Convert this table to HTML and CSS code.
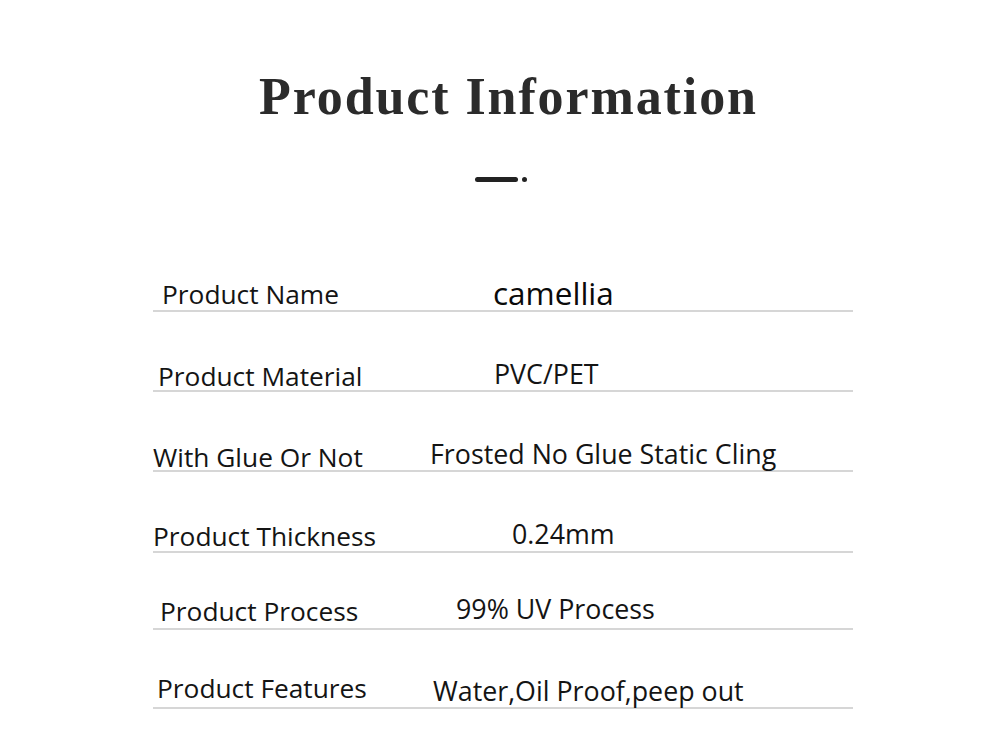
FILE: index.html
```html
<!DOCTYPE html>
<html lang="en">
<head>
<meta charset="utf-8">
<title>Product Information</title>
<link rel="stylesheet" href="styles.css">
</head>
<body>
<main class="page">
  <h1 class="title">Product Information</h1>
  <div class="divider"><span class="divider-line"></span><span class="divider-dot"></span></div>
  <section class="spec">
    <div class="row r1"><div class="label">Product Name</div><div class="value value-big">camellia</div></div>
    <div class="row r2"><div class="label">Product Material</div><div class="value">PVC/PET</div></div>
    <div class="row r3"><div class="label">With Glue Or Not</div><div class="value">Frosted No Glue Static Cling</div></div>
    <div class="row r4"><div class="label">Product Thickness</div><div class="value">0.24mm</div></div>
    <div class="row r5"><div class="label">Product Process</div><div class="value">99% UV Process</div></div>
    <div class="row r6"><div class="label">Product Features</div><div class="value">Water,Oil Proof,peep out</div></div>
  </section>
</main>
</body>
</html>
```

FILE: styles.css
```css
html, body {
  margin: 0;
  padding: 0;
  background: #ffffff;
}

.page {
  width: 1000px;
  height: 741px;
  padding-top: 67px;
  box-sizing: border-box;
  overflow: hidden;
}

.title {
  margin: 0;
  padding-left: 17px;
  text-align: center;
  font-family: "Liberation Serif", "Times New Roman", serif;
  font-weight: bold;
  font-size: 52px;
  line-height: 60px;
  letter-spacing: 1.9px;
  color: #2b2b2b;
}

.divider {
  display: flex;
  justify-content: center;
  align-items: center;
  gap: 4px;
  height: 5px;
  margin-top: 50px;
  padding-left: 1px;
}

.divider-line {
  width: 43px;
  height: 5px;
  border-radius: 3px;
  background: #222222;
}

.divider-dot {
  width: 5px;
  height: 5px;
  border-radius: 50%;
  background: #222222;
}

.spec {
  margin-top: 50px;
  margin-left: 153px;
  width: 700px;
  font-family: "Open Sans", "Noto Sans", sans-serif;
  font-size: 26.3px;
  line-height: 26px;
  color: #141414;
}

.row {
  display: flex;
  align-items: flex-end;
  height: var(--h);
  border-bottom: 2px solid #d6d6d6;
}

.label {
  flex: 0 0 auto;
  box-sizing: border-box;
  width: var(--vx);
  padding-left: var(--lx);
  padding-bottom: var(--lb);
  white-space: nowrap;
}

.value {
  font-size: 26.8px;
  padding-bottom: var(--vb);
  white-space: nowrap;
}

.value-big {
  font-size: 31.5px;
  line-height: 30px;
  color: #0a0a0a;
}

.r1 { --h: 78px; --lx: 9px; --vx: 340px; --lb: 3px; --vb: 2px; }
.r2 { --h: 78px; --lx: 5px; --vx: 341px; --lb: 1px; --vb: 3px; }
.r3 { --h: 78px; --lx: 0px; --vx: 277px; --lb: 0px; --vb: 3px; }
.r4 { --h: 79px; --lx: 0px; --vx: 359px; --lb: 2px; --vb: 4px; }
.r5 { --h: 75px; --lx: 7px; --vx: 303px; --lb: 4px; --vb: 6px; }
.r6 { --h: 77px; --lx: 4px; --vx: 280px; --lb: 6px; --vb: 3px; }
```
